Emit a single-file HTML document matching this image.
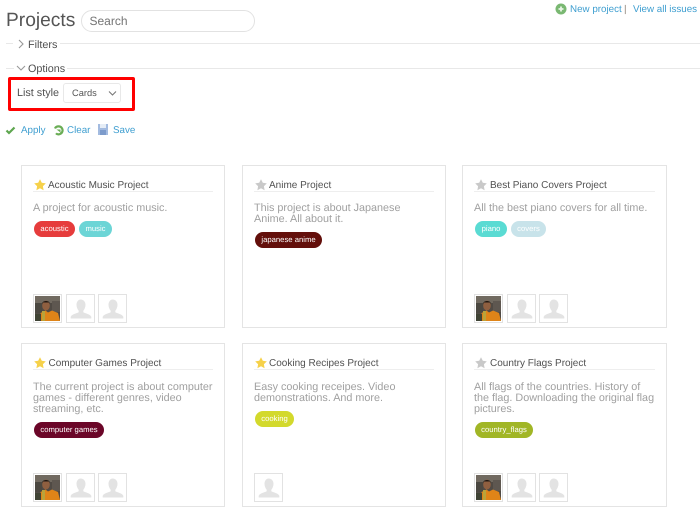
<!DOCTYPE html>
<html><head><meta charset="utf-8">
<style>
html,body{margin:0;padding:0;background:#fff;width:700px;height:511px;overflow:hidden}
body{font-family:"Liberation Sans",sans-serif;color:#505050;text-rendering:geometricPrecision}
#w{position:absolute;left:0;top:0;width:700px;height:511px;background:#fff;filter:blur(.3px)}
.a{position:absolute;white-space:nowrap}
a{color:#3e9ed0;text-decoration:none}
.hr{position:absolute;height:1px;background:#e8e8e8}
.card{position:absolute;width:204px;box-sizing:border-box;border:1px solid #e4e4e4}
.card .t{position:absolute;left:26px;top:12.500px;font-size:10px;line-height:13px;color:#505050;white-space:nowrap}
.r2 .t{top:13px}
.card .u{position:absolute;left:11px;right:11px;top:25px;height:1px;background:#eee}
.card .s{position:absolute;left:12px;top:12.500px}
.card .d{position:absolute;left:11px;top:37px;width:181px;font-size:10.800px;line-height:11px;color:#a0a0a0}
.r2 .d{top:38px}
.tag{position:absolute;height:16px;line-height:16px;border-radius:8px;color:#fff;font-size:7.700px;text-align:center}
.av{position:absolute;width:29px;height:29px;box-sizing:border-box;border:1px solid #e2e2e2;background:#fff}
.av svg{display:block}
</style></head><body>
<svg width="0" height="0" style="position:absolute">
<defs>
<symbol id="star" viewBox="0 0 12 12"><path d="M6 .3l1.800 3.500 4 .6-2.900 2.800.7 4L6 9.300l-3.600 1.900.7-4L.2 4.400l4-.6z"/></symbol>
<symbol id="p" viewBox="0 0 27 27"><path d="M13.500 4.500c3 0 5 2.200 5 5.300 0 2.400-1 4.700-2.200 6v1.500c1.500 1.200 6.700 1.600 8 4.500v1.700H3.700v-1.700c1.300-2.900 6.500-3.300 8-4.500v-1.500c-1.200-1.300-2.200-3.600-2.200-6 0-3.100 2-5.300 4-5.300z" fill="#e3e3e3"/></symbol>
<symbol id="ph" viewBox="0 0 25 25">
<rect width="25" height="25" fill="#504a44"/>
<rect width="25" height="7" fill="#716a60"/>
<rect x="0" y="7" width="7" height="10" fill="#4a4740"/>
<rect x="17" y="5" width="8" height="11" fill="#5e5750"/>
<ellipse cx="11" cy="9.500" rx="3.800" ry="5" fill="#8f5f40"/>
<path d="M7 8c0-4 8-4 8 0l-1-1.500H8z" fill="#211a14"/>
<path d="M6 25l-.5-8 5-2.500 2.500 2 4-2 6 2.500 2 8z" fill="#df8418"/>
<rect x="0" y="18" width="6" height="7" fill="#3f4334"/>
<rect x="7" y="15" width="3" height="10" fill="#b9a33a"/>
</symbol>
</defs>
</svg>
<div id="w">

<div class="a" style="left:6px;top:8.500px;font-size:19.200px;line-height:24px;color:#555">Projects</div>
<div class="a" style="left:81px;top:10px;width:174px;height:22px;box-sizing:border-box;border:1px solid #e2e2e2;border-radius:11px;font-size:12px;line-height:20px;padding-left:7.500px;color:#757575">Search</div>

<svg class="a" style="left:555px;top:3px" width="12" height="12" viewBox="0 0 12 12"><circle cx="6" cy="6" r="5.500" fill="#7ab872"/><path d="M6 3.500v5M3.500 6h5" stroke="#e9f4e6" stroke-width="1.800"/></svg>
<a class="a" style="left:570px;top:2.500px;font-size:9.800px;line-height:13px">New project</a>
<div class="a" style="left:624px;top:2.500px;font-size:9.800px;line-height:13px;color:#8f8478">|</div>
<a class="a" style="left:633px;top:2.500px;font-size:9.800px;line-height:13px">View all issues</a>

<div class="hr" style="left:6px;top:43px;width:7px"></div>
<div class="hr" style="left:60px;top:43px;width:640px"></div>
<svg class="a" style="left:17px;top:39px" width="8" height="10" viewBox="0 0 8 10"><path d="M2 1l4 4-4 4" fill="none" stroke="#999" stroke-width="1.100"/></svg>
<div class="a" style="left:28px;top:37.500px;font-size:10.800px;line-height:14px">Filters</div>

<div class="hr" style="left:6px;top:68px;width:8px"></div>
<div class="hr" style="left:67px;top:68px;width:633px"></div>
<svg class="a" style="left:16px;top:64px" width="10" height="8" viewBox="0 0 10 8"><path d="M1 2l4 4 4-4" fill="none" stroke="#999" stroke-width="1.100"/></svg>
<div class="a" style="left:28px;top:61.500px;font-size:10.800px;line-height:14px">Options</div>

<div class="a" style="left:8px;top:77px;width:127px;height:34px;box-sizing:border-box;border:3px solid #f00;border-radius:2px"></div>
<div class="a" style="left:17px;top:86px;font-size:10.800px;line-height:14px">List style</div>
<div class="a" style="left:63px;top:83px;width:58px;height:20px;box-sizing:border-box;border:1px solid #e8e8e8;border-radius:3px;font-size:9.300px;line-height:18px;padding-left:8px;color:#555">Cards</div>
<svg class="a" style="left:108px;top:90px" width="9" height="7" viewBox="0 0 9 7"><path d="M1 1.500l3.500 3.500 3.500-3.500" fill="none" stroke="#777" stroke-width="1.100"/></svg>

<svg class="a" style="left:5px;top:125px" width="11" height="10" viewBox="0 0 11 10"><path d="M1.500 5.500l2.500 2.500 5.500-5.500" fill="none" stroke="#5ea64f" stroke-width="2.200"/></svg>
<a class="a" style="left:21px;top:123.500px;font-size:9.800px;line-height:13px">Apply</a>
<svg class="a" style="left:53px;top:124px" width="11" height="12" viewBox="0 0 11 12"><path d="M2 4.500C3 2 7 1.500 8.800 4c1.500 2.200.7 5-1.800 6-1.600.6-3.200.2-4-.7" fill="none" stroke="#6aad55" stroke-width="2.200"/><path d="M3.500 5.500h4v3z" fill="#6aad55"/></svg>
<a class="a" style="left:67px;top:123.500px;font-size:9.800px;line-height:13px">Clear</a>
<svg class="a" style="left:98px;top:124px" width="10" height="11" viewBox="0 0 10 11"><rect width="10" height="11" fill="#a3bbe0"/><rect x="2" y="0" width="6" height="4" fill="#e6edf6"/><rect x="2" y="6" width="6" height="5" fill="#7c9bcb"/></svg>
<a class="a" style="left:113px;top:123.500px;font-size:9.800px;line-height:13px">Save</a>

<!-- Row 1 -->
<div class="card" style="left:21px;top:165px;height:163px">
<svg class="s" width="12" height="12" fill="#f6d14a"><use href="#star"/></svg>
<div class="t">Acoustic Music Project</div><div class="u"></div>
<div class="d">A project for acoustic music.</div>
<div class="tag" style="left:12px;top:55px;width:41px;background:#e63c3c">acoustic</div>
<div class="tag" style="left:57px;top:55px;width:33px;background:#6cd5d6">music</div>
<div class="av" style="left:11px;top:128px"><svg width="27" height="27"><use href="#ph" x="1" y="1" width="25" height="25"/></svg></div>
<div class="av" style="left:44px;top:128px"><svg width="27" height="27"><use href="#p"/></svg></div>
<div class="av" style="left:76px;top:128px"><svg width="27" height="27"><use href="#p"/></svg></div>
</div>

<div class="card" style="left:242px;top:165px;height:163px">
<svg class="s" width="12" height="12" fill="#c9c9c9"><use href="#star"/></svg>
<div class="t">Anime Project</div><div class="u"></div>
<div class="d">This project is about Japanese<br>Anime. All about it.</div>
<div class="tag" style="left:12px;top:66px;width:67px;background:#630f0b">japanese anime</div>
</div>

<div class="card" style="left:462px;top:165px;height:163px;width:205px">
<svg class="s" width="12" height="12" fill="#c9c9c9"><use href="#star"/></svg>
<div class="t" style="left:27px">Best Piano Covers Project</div><div class="u"></div>
<div class="d">All the best piano covers for all time.</div>
<div class="tag" style="left:12px;top:55px;width:32px;background:#5adbd3">piano</div>
<div class="tag" style="left:48px;top:55px;width:35px;background:#c8e3ea">covers</div>
<div class="av" style="left:11px;top:128px"><svg width="27" height="27"><use href="#ph" x="1" y="1" width="25" height="25"/></svg></div>
<div class="av" style="left:44px;top:128px"><svg width="27" height="27"><use href="#p"/></svg></div>
<div class="av" style="left:76px;top:128px"><svg width="27" height="27"><use href="#p"/></svg></div>
</div>

<!-- Row 2 -->
<div class="card r2" style="left:21px;top:343px;height:164px">
<svg class="s" width="12" height="12" fill="#f6d14a"><use href="#star"/></svg>
<div class="t" style="left:26.500px">Computer Games Project</div><div class="u"></div>
<div class="d">The current project is about computer<br>games - different genres, video<br>streaming, etc.</div>
<div class="tag" style="left:12px;top:78px;width:70px;background:#6b0628">computer games</div>
<div class="av" style="left:11px;top:129px"><svg width="27" height="27"><use href="#ph" x="1" y="1" width="25" height="25"/></svg></div>
<div class="av" style="left:44px;top:129px"><svg width="27" height="27"><use href="#p"/></svg></div>
<div class="av" style="left:76px;top:129px"><svg width="27" height="27"><use href="#p"/></svg></div>
</div>

<div class="card r2" style="left:242px;top:343px;height:164px">
<svg class="s" width="12" height="12" fill="#f6d14a"><use href="#star"/></svg>
<div class="t">Cooking Recipes Project</div><div class="u"></div>
<div class="d">Easy cooking receipes. Video<br>demonstrations. And more.</div>
<div class="tag" style="left:12px;top:67px;width:39px;background:#d3d92c">cooking</div>
<div class="av" style="left:11px;top:129px"><svg width="27" height="27"><use href="#p"/></svg></div>
</div>

<div class="card r2" style="left:462px;top:343px;height:164px;width:205px">
<svg class="s" width="12" height="12" fill="#c9c9c9"><use href="#star"/></svg>
<div class="t" style="left:27px">Country Flags Project</div><div class="u"></div>
<div class="d" style="width:190px">All flags of the countries. History of<br>the flag. Downloading the original flag<br>pictures.</div>
<div class="tag" style="left:12px;top:78px;width:58px;background:#a1b626">country_flags</div>
<div class="av" style="left:11px;top:129px"><svg width="27" height="27"><use href="#ph" x="1" y="1" width="25" height="25"/></svg></div>
<div class="av" style="left:44px;top:129px"><svg width="27" height="27"><use href="#p"/></svg></div>
<div class="av" style="left:76px;top:129px"><svg width="27" height="27"><use href="#p"/></svg></div>
</div>
</div>
</body></html>
